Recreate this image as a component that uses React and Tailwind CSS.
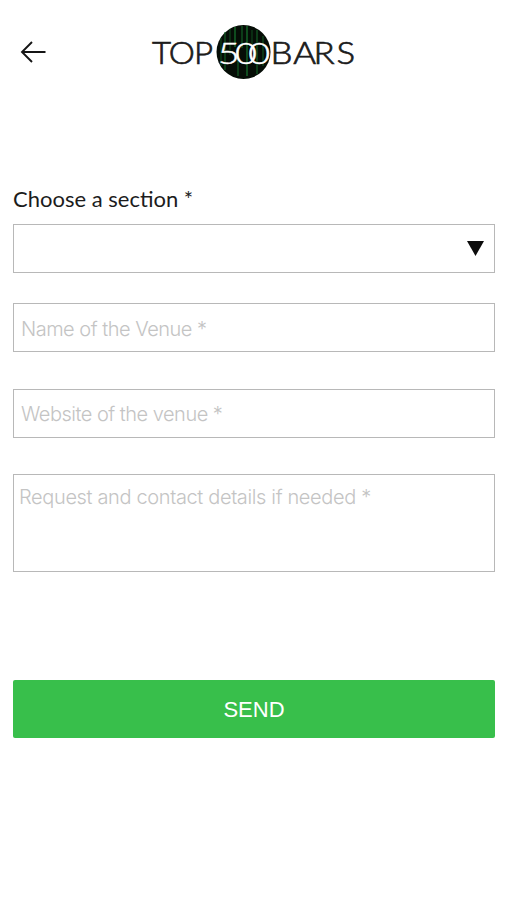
import React, { useState } from "react";

const SECTIONS = ["Add a venue", "Update a venue", "Other request"];

const FIELD =
  "block w-full rounded-none border border-[#b8b8b8] bg-white text-[20px] font-light text-[#333] placeholder:text-[#c4c4c4] placeholder:opacity-100 focus:outline-none font-['Inter','Liberation_Sans',sans-serif]";

// Vertical streaks inside the round badge
const STREAKS = [
  { x: 221, y: 38, h: 28, o: 0.4 },
  { x: 225, y: 32, h: 38, o: 0.6 },
  { x: 230, y: 29, h: 26, o: 0.4 },
  { x: 235, y: 27, h: 20, o: 0.8 },
  { x: 238, y: 50, h: 26, o: 0.6 },
  { x: 242, y: 26, h: 22, o: 0.6 },
  { x: 247, y: 26, h: 50, o: 0.8 },
  { x: 252, y: 30, h: 18, o: 0.4 },
  { x: 257, y: 30, h: 44, o: 0.6 },
  { x: 263, y: 36, h: 30, o: 0.5 },
];

function Logo() {
  return (
    <svg
      width="206"
      height="56"
      viewBox="151 24 206 56"
      className="font-['Lato','Open_Sans',sans-serif]"
    >
      <g fontSize="30.5" fontWeight="300" fill="#1c1c1c" stroke="#1c1c1c" strokeWidth="0.7">
        <text transform="translate(152 64) scale(1.08 1)" x="0 15.6 38.8" y="0">
          TOP
        </text>
        <text transform="translate(270.5 64) scale(1.14 1)" x="0 20 37.7 57.8" y="0">
          BARS
        </text>
      </g>
      <circle cx="243.5" cy="52" r="27" fill="#050d06" />
      {STREAKS.map((s) => (
        <line
          key={s.x}
          x1={s.x}
          x2={s.x}
          y1={s.y}
          y2={s.y + s.h}
          stroke="#14662a"
          strokeWidth="1.8"
          opacity={s.o}
        />
      ))}
      <g
        transform="translate(218 64) scale(1.26 1)"
        fill="#fff"
        stroke="#fff"
        strokeWidth="0.5"
        fontSize="30"
        fontWeight="300"
      >
        <text x="-0.2 13.5 24" y="0">
          500
        </text>
      </g>
    </svg>
  );
}

export default function App() {
  const [form, setForm] = useState({ section: "", name: "", website: "", request: "" });

  const handleChange = (e) => {
    setForm({ ...form, [e.target.name]: e.target.value });
  };

  const handleSubmit = (e) => {
    e.preventDefault();
    console.log("request:", form);
  };

  return (
    <div className="min-h-screen bg-white">
      {/* Header */}
      <header className="grid h-[104px] grid-cols-[1fr_auto_1fr] items-center px-5">
        <button type="button" aria-label="Back" className="w-7">
          <svg width="28" height="24" viewBox="0 0 28 24" fill="none" stroke="#151515" strokeWidth="1.9">
            <path d="M25.5 12H2M12 2 2 12l10 10" />
          </svg>
        </button>
        <Logo />
      </header>

      <form onSubmit={handleSubmit} className="flex flex-col pt-[79px] pr-3 pl-[13px]">
        {/* Section */}
        <label
          htmlFor="section"
          className="mb-[9px] text-[22px] leading-8 text-[#1c1c1c] font-['Lato','Open_Sans',sans-serif]"
        >
          Choose a section *
        </label>
        <div className="grid items-center">
          <select
            id="section"
            name="section"
            value={form.section}
            onChange={handleChange}
            className={`${FIELD} col-start-1 row-start-1 h-[49px] appearance-none px-[7px]`}
          >
            <option value=""></option>
            {SECTIONS.map((s) => (
              <option key={s}>{s}</option>
            ))}
          </select>
          <svg
            width="17"
            height="15"
            viewBox="0 0 17 15"
            className="pointer-events-none col-start-1 row-start-1 mr-[11px] justify-self-end"
          >
            <path d="M0 0h17L8.5 15z" fill="#0c0c0c" />
          </svg>
        </div>

        {/* Venue */}
        <input
          name="name"
          value={form.name}
          onChange={handleChange}
          placeholder="Name of the Venue *"
          className={`${FIELD} mt-[30px] h-[49px] px-[7px] pt-0.5 tracking-[-0.5px]`}
        />
        <input
          name="website"
          value={form.website}
          onChange={handleChange}
          placeholder="Website of the venue *"
          className={`${FIELD} mt-[37px] h-[49px] px-[7px] pt-px tracking-[-0.5px]`}
        />
        <textarea
          name="request"
          value={form.request}
          onChange={handleChange}
          placeholder="Request and contact details if needed *"
          className={`${FIELD} mt-9 h-[98px] resize-none px-[5px] pt-2 leading-7 tracking-[-0.36px]`}
        />

        <button
          type="submit"
          className="mt-[108px] h-[58px] rounded-[2px] bg-[#38bf4b] text-[22px] text-white font-['Liberation_Sans',Arial,sans-serif]"
        >
          SEND
        </button>
      </form>
    </div>
  );
}
